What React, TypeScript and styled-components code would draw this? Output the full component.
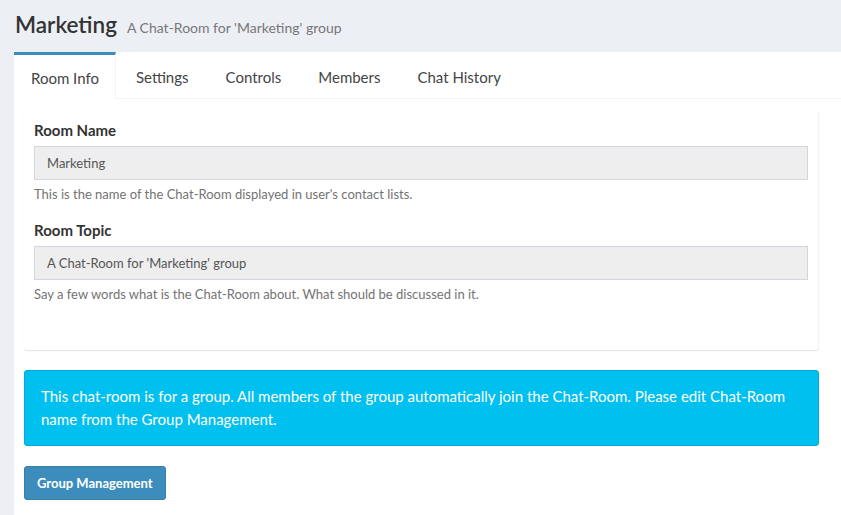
import React, { useState } from 'react'
import styled, { createGlobalStyle, css } from 'styled-components'

const GlobalStyle = createGlobalStyle`
  html, body {
    margin: 0;
    padding: 0;
    background: #ecf0f5;
    font-family: Lato, 'Open Sans', sans-serif;
    color: #333;
  }
  * {
    box-sizing: border-box;
  }
`

const Page = styled.div`
  min-height: 515px;
  padding-left: 14px;
  display: flex;
  flex-direction: column;
`

const Header = styled.div`
  display: flex;
  align-items: baseline;
  gap: 10px;
  height: 52px;
  padding: 10px 0 0 1px;
`

const Title = styled.h1`
  margin: 0;
  font-size: 22.5px;
  font-weight: 600;
  color: #333;
  line-height: 30px;
`

const Subtitle = styled.small`
  font-size: 14px;
  color: #777;
`

const Panel = styled.div`
  flex: 1;
  background: #fff;
`

const TabBar = styled.ul`
  display: flex;
  margin: 0;
  padding: 0;
  list-style: none;
  border-bottom: 1px solid #f4f4f4;
`

interface ITabProps {
  readonly active?: boolean
}

const Tab = styled.li<ITabProps>`
  height: 46px;
  padding: 1px 16px 0 17px;
  margin-right: 4px;
  display: flex;
  align-items: center;
  font-size: 15px;
  color: #444;
  border-top: 3px solid transparent;
  cursor: pointer;

  ${props =>
    props.active &&
    css`
      border-top-color: #3c8dbc;
      border-right: 1px solid #f4f4f4;
      margin-right: 3px;
      margin-bottom: -1px;
      height: 47px;
      background: #fff;
    `}
`

const TabContent = styled.div`
  padding: 11px 22px 20px 10px;
`

const Box = styled.div`
  background: #fff;
  border-radius: 3px;
  box-shadow: 0 1px 1px rgba(0, 0, 0, 0.12);
  border-right: 1px solid #f4f4f4;
  padding: 10px 10px 47px;
`

const FormGroup = styled.div`
  margin-bottom: 17px;
  &:last-child {
    margin-bottom: 0;
  }
`

const Label = styled.label`
  display: block;
  font-size: 15px;
  font-weight: 700;
  line-height: 20px;
  margin-bottom: 6px;
  color: #333;
`

const Input = styled.input`
  display: block;
  width: 100%;
  height: 34px;
  padding: 6px 12px;
  font-family: inherit;
  font-size: 13px;
  color: #555;
  background: #eee;
  border: 1px solid #d2d6de;
  border-radius: 0;
  outline: none;
`

const Help = styled.p`
  margin: 5px 0 0;
  font-size: 13px;
  line-height: 18px;
  color: #737373;
`

const Alert = styled.div`
  margin-top: 20px;
  padding: 14px 15px 14px 16px;
  background: #00c0ef;
  border: 1px solid #00acd6;
  border-radius: 3px;
  color: #fff;
  font-size: 15px;
  line-height: 23px;
`

const Button = styled.button`
  margin-top: 20px;
  height: 34px;
  padding: 0 12px;
  background: #3c8dbc;
  border: 1px solid #367fa9;
  border-radius: 3px;
  color: #fff;
  font-family: inherit;
  font-size: 13px;
  font-weight: 700;
  cursor: pointer;
`

const tabs = ['Room Info', 'Settings', 'Controls', 'Members', 'Chat History']

export default () => {
  const [active, setActive] = useState(0)
  return (
    <>
      <GlobalStyle />
      <Page>
        <Header>
          <Title>Marketing</Title>
          <Subtitle>A Chat-Room for 'Marketing' group</Subtitle>
        </Header>
        <Panel>
          <TabBar>
            {tabs.map((t, i) => (
              <Tab key={t} active={i === active} onClick={() => setActive(i)}>
                {t}
              </Tab>
            ))}
          </TabBar>
          <TabContent>
            <Box>
              <FormGroup>
                <Label>Room Name</Label>
                <Input value="Marketing" disabled readOnly />
                <Help>This is the name of the Chat-Room displayed in user's contact lists.</Help>
              </FormGroup>
              <FormGroup>
                <Label>Room Topic</Label>
                <Input value="A Chat-Room for 'Marketing' group" disabled readOnly />
                <Help>Say a few words what is the Chat-Room about. What should be discussed in it.</Help>
              </FormGroup>
            </Box>
            <Alert>
              This chat-room is for a group. All members of the group automatically join the
              Chat-Room. Please edit Chat-Room name from the Group Management.
            </Alert>
            <Button>Group Management</Button>
          </TabContent>
        </Panel>
      </Page>
    </>
  )
}
